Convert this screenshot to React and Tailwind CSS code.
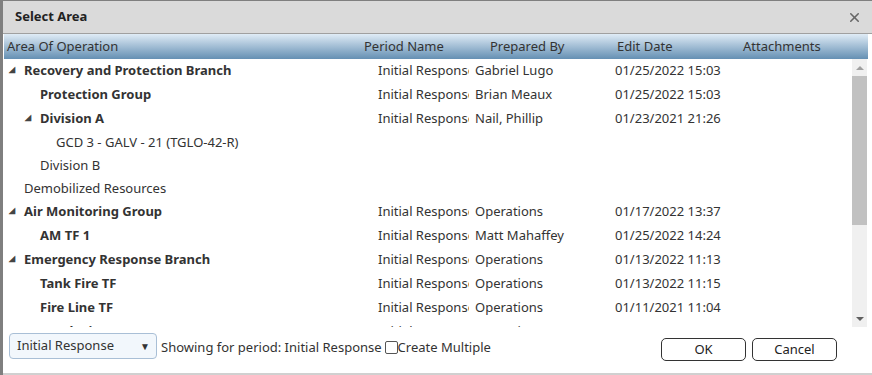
import { X } from "lucide-react";

const rows = [
  { name: "Recovery and Protection Branch", level: 0, bold: true, toggle: true, period: "Initial Response", by: "Gabriel Lugo", date: "01/25/2022 15:03" },
  { name: "Protection Group", level: 1, bold: true, period: "Initial Response", by: "Brian Meaux", date: "01/25/2022 15:03" },
  { name: "Division A", level: 1, bold: true, toggle: true, period: "Initial Response", by: "Nail, Phillip", date: "01/23/2021 21:26" },
  { name: "GCD 3 - GALV - 21 (TGLO-42-R)", level: 2 },
  { name: "Division B", level: 1 },
  { name: "Demobilized Resources", level: 0 },
  { name: "Air Monitoring Group", level: 0, bold: true, toggle: true, period: "Initial Response", by: "Operations", date: "01/17/2022 13:37" },
  { name: "AM TF 1", level: 1, bold: true, period: "Initial Response", by: "Matt Mahaffey", date: "01/25/2022 14:24" },
  { name: "Emergency Response Branch", level: 0, bold: true, toggle: true, period: "Initial Response", by: "Operations", date: "01/13/2022 11:13" },
  { name: "Tank Fire TF", level: 1, bold: true, period: "Initial Response", by: "Operations", date: "01/13/2022 11:15" },
  { name: "Fire Line TF", level: 1, bold: true, period: "Initial Response", by: "Operations", date: "01/11/2021 11:04" },
  { name: "Brush Fire TF", level: 1, bold: true, period: "Initial Response", by: "Operations", date: "01/17/2022 12:50" },
];

const indent = ["pl-[20px]", "pl-[36px]", "pl-[52px]"];
const arrowPos = ["left-[5px]", "left-[21px]", "left-[37px]"];

function Row({ r }) {
  return (
    <div className={`flex items-center text-[#333] ${r.period ? "h-[24px]" : "h-[23px]"}`}>
      <div className={`relative w-[374px] shrink-0 ${indent[r.level]} ${r.bold ? "font-bold" : ""}`}>
        {r.toggle && (
          <span className={`absolute top-[4px] ${arrowPos[r.level]} text-[8px] leading-none text-[#444]`}>◢</span>
        )}
        {r.name}
      </div>
      <div className="w-[97px] shrink-0">
        <div className="w-[91px] overflow-hidden whitespace-nowrap">{r.period}</div>
      </div>
      <div className="w-[140px] shrink-0">{r.by}</div>
      <div className="w-[130px] shrink-0">{r.date}</div>
    </div>
  );
}

export default function App() {
  return (
    <div className="w-[872px] h-[375px] bg-white overflow-hidden text-[13px]" style={{ fontFamily: "'Noto Sans', 'Open Sans', sans-serif" }}>
      <div className="h-full border-l-[3px] border-t border-[#7f7f7f] flex flex-col">
        <div className="h-[33px] shrink-0 bg-[#dadada] flex items-center justify-between pl-[12px] pr-[10px] border-b border-[#a0a0a0]">
          <span className="font-bold text-[13px] text-[#222]">Select Area</span>
          <X size={15} strokeWidth={2.5} className="text-[#666]" />
        </div>
        <div className="flex-1 flex flex-col pl-[1px] pr-[4px]">
          <div className="h-[25px] shrink-0 flex items-center text-[#333] bg-gradient-to-b from-[#e0ecf6] to-[#6590b3]">
            <div className="w-[360px] pl-[3px]">Area Of Operation</div>
            <div className="w-[126px]">Period Name</div>
            <div className="w-[127px]">Prepared By</div>
            <div className="w-[126px]">Edit Date</div>
            <div>Attachments</div>
          </div>
          <div className="h-[268px] shrink-0 flex overflow-hidden">
            <div className="flex-1 overflow-hidden">
              {rows.map((r) => (
                <Row key={r.name} r={r} />
              ))}
            </div>
            <div className="w-[15px] shrink-0 bg-[#f0f0f0] flex flex-col items-center mr-[1px]">
              <div className="h-[17px] flex items-center justify-center">
                <span className="w-0 h-0 border-l-[4px] border-r-[4px] border-b-[4px] border-transparent border-b-[#a0a0a0]"></span>
              </div>
              <div className="w-[15px] h-[149px] bg-[#c1c1c1]"></div>
              <div className="flex-1"></div>
              <div className="h-[17px] flex items-center justify-center">
                <span className="w-0 h-0 border-l-[4px] border-r-[4px] border-t-[4px] border-transparent border-t-[#606060]"></span>
              </div>
            </div>
          </div>
          <div className="flex items-start pt-[6px] pl-[5px]">
            <div className="w-[148px] h-[26px] rounded-[4px] border border-[#a9bfd6] bg-[#f2f7fc] flex items-center justify-between pl-[7px] pr-[6px] text-[#333]">
              <span>Initial Response</span>
              <span className="text-[10px]">▼</span>
            </div>
            <div className="ml-[4px] mt-[5px] flex items-center text-[#333]">
              <span>Showing for period: Initial Response</span>
              <span className="ml-[3px] w-[13px] h-[13px] border border-[#555] rounded-[2px] bg-white"></span>
              <span>Create Multiple</span>
            </div>
            <div className="flex-1"></div>
            <div className="flex gap-[6px] mt-[5px] mr-[31px]">
              <button className="w-[85px] h-[23px] border border-[#333] rounded-[5px] bg-white text-[#222]">OK</button>
              <button className="w-[85px] h-[23px] border border-[#333] rounded-[5px] bg-white text-[#222]">Cancel</button>
            </div>
          </div>
        </div>
        <div className="h-[2px] bg-[#d0d0d0]"></div>
      </div>
    </div>
  );
}
